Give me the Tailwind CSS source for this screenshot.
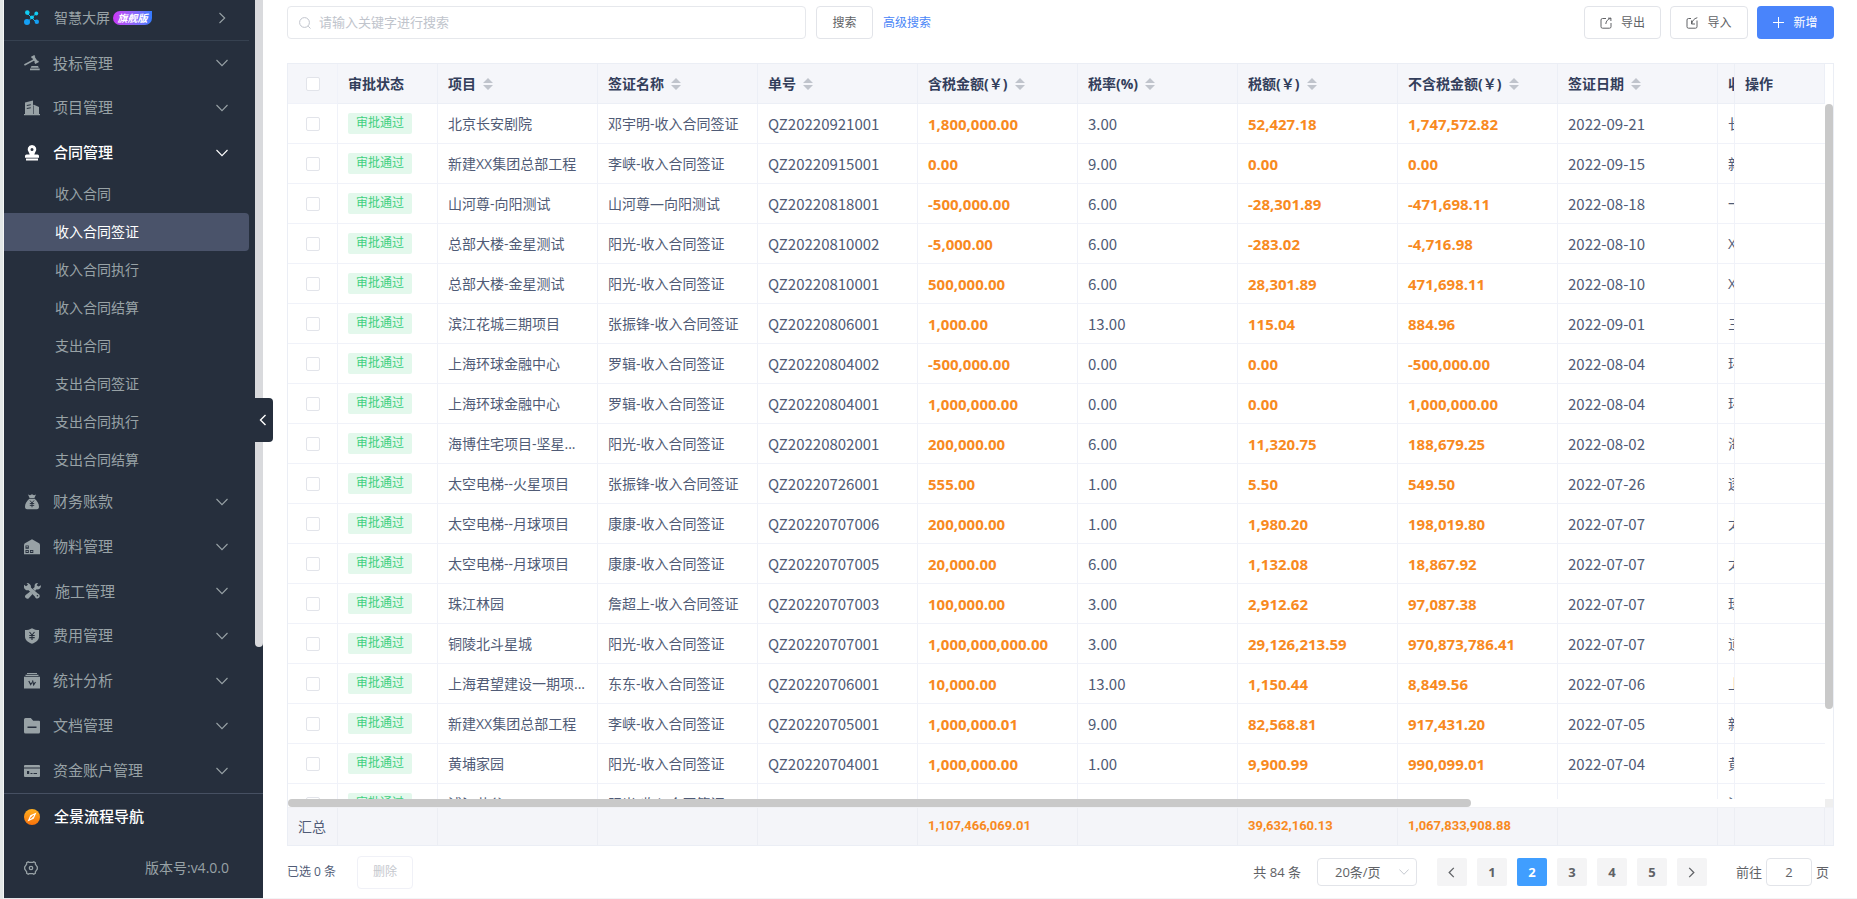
<!DOCTYPE html>
<html lang="zh-CN">
  <head>
    <meta charset="UTF-8" />
    <meta name="viewport" content="width=device-width, initial-scale=1.0" />
    <script src="https://cdn.jsdelivr.net/npm/@tailwindcss/browser@4"></script>
    <title>收入合同签证</title>
  </head>
  <body class="font-['Open_Sans','Noto_Sans_CJK_SC',sans-serif] text-sm text-[#505b76] bg-white">
    <!-- shared icons -->
    <svg class="hidden">
      <symbol id="down" viewBox="0 0 12 12"><path d="M.5 3 6 8.700 11.500 3" fill="none" stroke="currentColor" stroke-width="1.1" /></symbol>
      <symbol id="right" viewBox="0 0 12 12"><path d="M3.500 1 8.700 6 3.500 11" fill="none" stroke="currentColor" stroke-width="1.1" /></symbol>
      <symbol id="left" viewBox="0 0 12 12"><path d="M8.500 1 3.500 6l5 5" fill="none" stroke="currentColor" stroke-width="1.4" /></symbol>
      <symbol id="sort" viewBox="0 0 10 12"><path d="M5 0l5 5H0zM5 12l5-5H0z" fill="#c0c4cc" /></symbol>
    </svg>

    <div class="flex h-screen overflow-hidden">
      <div class="w-1 shrink-0 bg-[#e3e7e7] border-r border-[#f4f6f6]"></div>

      <!-- sidebar -->
      <aside class="relative flex flex-col w-[259px] shrink-0 bg-[#262f3d] text-[#98a2a6] border-b border-gray-200">
        <a href="#" class="flex items-center h-[41px] pb-1 pl-5 pr-[21px] mr-[14px] border-b border-[#364150]">
          <svg class="w-4 h-4" viewBox="0 0 16 16">
            <path d="M3.500 3.500 12.500 12.500M12 3.500 3 12.500" stroke="#14b4ee" stroke-width="1" />
            <g fill="#12cdf2"><circle cx="3.300" cy="2.600" r="2.300" /><circle cx="12.300" cy="3.500" r="1.900" /><circle cx="8" cy="7.300" r="1.900" /></g>
            <g fill="#15a0f5"><circle cx="3" cy="12" r="3" /><circle cx="12.800" cy="11.800" r="2.200" /></g>
          </svg>
          <span class="ml-[14px]">智慧大屏</span>
          <span class="ml-[3px] w-[39px] h-[14px] leading-[14px] text-center text-[10px] italic font-bold text-white rounded-l-full rounded-br-full bg-linear-to-r from-[#c935f5] to-[#2f7bff]">旗舰版</span>
          <svg class="w-3 h-3 ml-auto"><use href="#right" /></svg>
        </a>

        <nav class="flex flex-col flex-1 text-[15px]">
          <a href="#" class="flex flex-1 items-center pl-5 pr-[35px]">
            <svg class="w-4 h-4 mr-[13px]" viewBox="0 0 16 16" fill="currentColor"><path d="M7 1.700 10.300 0l1 1.400-.6.400 2.600 4 .7-.3 1 1.500-3.700 2-1-1.500.6-.4L10 5.800.8 10.700 0 9.200 9 4.500 8.200 3l-.5.300zM7.500 11h6.500l.8 1.700H6.700zM6 13.500h9.700v1.700H6z" /></svg>
            投标管理<svg class="w-3 h-3 ml-auto"><use href="#down" /></svg>
          </a>
          <a href="#" class="flex flex-1 items-center pl-5 pr-[35px]">
            <svg class="w-4 h-4 mr-[13px]" viewBox="0 0 16 16" fill="currentColor"><path fill-rule="evenodd" d="M1 2.500 9 .5V5l1-.3 5 2.300v7h1v1.300H0V14h1zM2.800 5v1.100l4-.8V4.200zM2.800 8v1.100l4-.8V7.200z" /><path d="M9.500 5.500V14" stroke="#262f3d" stroke-width=".6" /></svg>
            项目管理<svg class="w-3 h-3 ml-auto"><use href="#down" /></svg>
          </a>
          <a href="#" class="flex flex-1 items-center pl-5 pr-[35px] font-medium text-white">
            <svg class="w-4 h-4 mr-[13px]" viewBox="0 0 16 16" fill="currentColor"><path fill-rule="evenodd" d="M8 0a4.500 4.500 0 0 1 3 7.700L10.300 9.500h3.200a1.500 1.500 0 0 1 1.500 1.500v1.700H1V11a1.500 1.500 0 0 1 1.500-1.500h3.200L5 7.700A4.500 4.500 0 0 1 8 0zm0 2.900a1.500 1.500 0 1 0 0 3 1.500 1.500 0 0 0 0-3zM2 13.600h12v1.900H2z" /></svg>
            合同管理<svg class="w-3 h-3 ml-auto"><use href="#down" /></svg>
          </a>
          <div class="flex flex-col mr-[14px] text-sm leading-[38px]">
            <a href="#" class="pl-[51px]">收入合同</a>
            <a href="#" class="pl-[51px] bg-[#4a536a] text-white rounded-r-sm">收入合同签证</a>
            <a href="#" class="pl-[51px]">收入合同执行</a>
            <a href="#" class="pl-[51px]">收入合同结算</a>
            <a href="#" class="pl-[51px]">支出合同</a>
            <a href="#" class="pl-[51px]">支出合同签证</a>
            <a href="#" class="pl-[51px]">支出合同执行</a>
            <a href="#" class="pl-[51px]">支出合同结算</a>
          </div>
          <a href="#" class="flex flex-1 items-center pl-5 pr-[35px]">
            <svg class="w-4 h-4 mr-[13px]" viewBox="0 0 16 16" fill="currentColor"><path d="M4 .5 6 1.200 8 .3l2 .9 2-.7-1.600 3.500H5.600z" /><path d="M5.300 4.800h5.400c2.500 2 4.300 5 4.300 8 0 1.500-.7 2.400-2 2.400H3c-1.300 0-2-.9-2-2.400 0-3 1.800-6 4.300-8z" /><path d="M6 6.500 8 9l2-2.500M8 9v4.300M5.800 9.500h4.400M5.800 11.400h4.400" fill="none" stroke="#262f3d" stroke-width=".9" /></svg>
            财务账款<svg class="w-3 h-3 ml-auto"><use href="#down" /></svg>
          </a>
          <a href="#" class="flex flex-1 items-center pl-5 pr-[35px]">
            <svg class="w-4 h-4 mr-[13px]" viewBox="0 0 16 16" fill="currentColor"><path fill-rule="evenodd" d="M8 .2 15.500 4.500 16 6v9.300H0V6l.5-1.500zM1.500 6.500v3.200h3.300V6.500zM1.500 10.900v3.200h3.300v-3.200zM6 10.900v3.200h3.300v-3.200z" /><path d="M2.300 7.800h1.700M2.300 12.400h1.700M6.800 12.400h1.700" stroke="currentColor" /></svg>
            物料管理<svg class="w-3 h-3 ml-auto"><use href="#down" /></svg>
          </a>
          <a href="#" class="flex flex-1 items-center pl-5 pr-[35px]">
            <svg class="w-[17px] h-4 mr-[14px]" viewBox="0 0 17 16" fill="currentColor"><path d="M0 4.500V1.800l2 1.500 2-1.500L2.600 0C5.400-.1 7.400 2 6.900 4.500l6.900 6c2.200.8 2.500 3 1.200 4.200-1.400 1.300-3.700.8-4.200-1.300L4.600 7.200C2.500 7.800.5 6.500 0 4.500z" /><path d="M8.900 5.800 10.700 4C10 1.800 11.500-.3 14 .1L12.600 2.300 14.500 3.600 17 2.300c.1 2.600-2 4.500-4.300 4L10.900 8.100zM6.200 8.600 8.600 10.900 5 15a2.200 2.200 0 0 1-3.300-3.100z" /><circle cx="13.400" cy="12.800" r=".8" fill="#262f3d" /></svg>
            施工管理<svg class="w-3 h-3 ml-auto"><use href="#down" /></svg>
          </a>
          <a href="#" class="flex flex-1 items-center pl-5 pr-[35px]">
            <svg class="w-4 h-4 mr-[13px]" viewBox="0 0 16 16" fill="currentColor"><path d="M8 .2c2 1.300 4.500 1.800 7 1.800v6.500c0 3.500-3 6-7 7.200-4-1.200-7-3.700-7-7.200V2C3.500 2 6 1.500 8 .2z" /><path d="M5.500 4 8 7l2.500-3M8 7v5M5.300 7.500h5.400M5.300 9.600h5.400" fill="none" stroke="#262f3d" stroke-width="1.100" /></svg>
            费用管理<svg class="w-3 h-3 ml-auto"><use href="#down" /></svg>
          </a>
          <a href="#" class="flex flex-1 items-center pl-5 pr-[35px]">
            <svg class="w-4 h-4 mr-[13px]" viewBox="0 0 16 16" fill="currentColor"><path d="M3 0h10v1H3zM1.500 1.700h13v1.300h-13zM0 3.800h16v11.700H0z" /><path d="M4.800 8 6.700 11.500 8 9.500M8.500 7.500 9.700 11.800 11.500 9" fill="none" stroke="#262f3d" stroke-width="1.200" /></svg>
            统计分析<svg class="w-3 h-3 ml-auto"><use href="#down" /></svg>
          </a>
          <a href="#" class="flex flex-1 items-center pl-5 pr-[35px]">
            <svg class="w-4 h-4 mr-[13px]" viewBox="0 0 16 16" fill="currentColor"><path fill-rule="evenodd" d="M1.500 0h5.300l2.400 2.800H15a1 1 0 0 1 1 1V14a1.500 1.500 0 0 1-1.500 1.500h-13A1.500 1.500 0 0 1 0 14V1.500A1.500 1.500 0 0 1 1.500 0zM3.500 8.500v1.400h9V8.500z" /></svg>
            文档管理<svg class="w-3 h-3 ml-auto"><use href="#down" /></svg>
          </a>
          <a href="#" class="flex flex-1 items-center pl-5 pr-[35px]">
            <svg class="w-4 h-4 mr-[13px]" viewBox="0 0 16 16" fill="currentColor"><path fill-rule="evenodd" d="M1 2h14a1 1 0 0 1 1 1v1.500H0V3a1 1 0 0 1 1-1zM0 5.600h16V13a1 1 0 0 1-1 1H1a1 1 0 0 1-1-1zM3 8v3h2.200V8zM6.500 10v1.100h2V10zM9.500 10v1.100h3.500V10z" /></svg>
            资金账户管理<svg class="w-3 h-3 ml-auto"><use href="#down" /></svg>
          </a>
        </nav>

        <div class="h-[105px] border-t border-[#465062]">
          <a href="#" class="flex items-center h-[46px] pl-5 text-[15px] font-medium text-white">
            <svg class="w-4 h-4 mr-[14px]" viewBox="0 0 16 16"><defs><linearGradient id="orange" x2="0" y2="1"><stop stop-color="#ffb020" /><stop offset="1" stop-color="#f9720b" /></linearGradient></defs><circle cx="8" cy="8" r="8" fill="url(#orange)" /><path d="M12.500 3.500 9.700 9.700 3.500 12.500 6.300 6.300z" fill="#fff" /><path d="M6.300 9.700 9.700 6.300" stroke="#fb8a14" stroke-width="1.200" /></svg>
            全景流程导航
          </a>
          <div class="flex items-center justify-between h-[56px] pl-5 pr-[34px]">
            <svg class="w-[14px] h-[14px]" viewBox="0 0 14 14" fill="none" stroke="currentColor" stroke-width="1.300"><path d="M4.200.8 5.200 1.300h3.600l1-.5 1.600 1-.1 1.200L13.300 6v2l-2 3 .1 1.200-1.600 1-1-.5H5.200l-1 .5-1.600-1 .1-1.200L.7 8V6l2-3-.1-1.200z" /><circle cx="7" cy="7" r="1.700" /></svg>
            <span>版本号:v4.0.0</span>
          </div>
        </div>

        <!-- scrollbar and collapse handle lie over the menu edge -->
        <div class="absolute top-0 right-0 w-2 h-[647px] bg-[#d9dadd] rounded-b-full"></div>
        <button class="absolute left-[251px] top-[398px] flex items-center justify-center w-[18px] h-[44px] pr-0.5 bg-[#262f3d] text-white rounded-r-sm" aria-label="收起菜单">
          <svg class="w-3 h-3"><use href="#left" /></svg>
        </button>
      </aside>

      <main class="flex flex-col flex-1 min-w-0 pt-[6px] pl-6 pr-[23px] border-b border-gray-100">
        <!-- toolbar -->
        <div class="flex items-center h-[33px] text-xs text-[#606266]">
          <label class="flex items-center w-[519px] h-full px-[11px] border border-[#e6e8ec] rounded text-[#c0c4cc]">
            <svg class="w-3 h-3 mr-2" viewBox="0 0 12 12" fill="none" stroke="currentColor"><circle cx="5.500" cy="5.500" r="4.900" /><path d="m9.200 9.200 2.300 2.300" /></svg>
            <input type="text" placeholder="请输入关键字进行搜索" aria-label="搜索" class="flex-1 text-[13px] text-gray-600 placeholder:text-[#c0c4cc] outline-none" />
          </label>
          <button class="w-[57px] h-full ml-[10px] border border-[#e2e4e9] rounded">搜索</button>
          <a href="#" class="ml-[10px] text-[#4a86f7]">高级搜索</a>
          <div class="flex gap-[9px] ml-auto h-full">
            <button class="flex items-center justify-center gap-[9px] w-[77px] border border-[#e2e4e9] rounded">
              <svg class="w-3 h-3" viewBox="0 0 12 12" fill="none" stroke="currentColor"><path d="M6 1.500H2.500A1.500 1.500 0 0 0 1 3v6.700a1.500 1.500 0 0 0 1.500 1.500h7A1.500 1.500 0 0 0 11 9.700V6M8 1.200h3M10.900 1v3M10.900 1.200C8 2 6 4 5.800 7" /></svg>
              导出
            </button>
            <button class="flex items-center justify-center gap-[9px] w-[78px] border border-[#e2e4e9] rounded">
              <svg class="w-3 h-3" viewBox="0 0 12 12" fill="none" stroke="currentColor"><path d="M5 1.500H2.500A1.500 1.500 0 0 0 1 3v6.700a1.500 1.500 0 0 0 1.500 1.500h7A1.500 1.500 0 0 0 11 9.700V3.500M5.500 3.500V7H9M11.300.7C8 1.500 6 4 5.800 7" /></svg>
              导入
            </button>
            <button class="flex items-center justify-center gap-[9px] w-[77px] bg-[#4984fb] text-white rounded">
              <svg class="w-[11px] h-[11px]" viewBox="0 0 11 11" stroke="currentColor"><path d="M5.500 0v11M0 5.500h11" /></svg>
              新增
            </button>
          </div>
        </div>

        <!-- table -->
        <div class="flex flex-col flex-1 min-h-0 mt-6 border border-[#ebeef5]">
          <div class="flex">
            <table class="flex-1 w-full table-fixed border-separate border-spacing-0 bg-[#f5f6fa] text-left text-[#333e5b]">
              <colgroup class="cols"></colgroup>
              <thead><tr id="head" class="h-10"></tr></thead>
            </table>
            <div class="w-2 shrink-0 bg-white"></div>
          </div>
          <div class="flex flex-1 min-h-0">
            <div class="flex-1 min-w-0 overflow-hidden">
              <table class="w-full table-fixed border-separate border-spacing-0">
                <colgroup class="cols"></colgroup>
                <tbody id="rows"></tbody>
              </table>
            </div>
            <div class="w-2 shrink-0"><div class="h-[87%] bg-[#c9c9c9] rounded-full"></div></div>
          </div>
          <div class="flex h-2">
            <div class="flex-1"><div class="w-[77%] h-2 bg-[#c9c9c9] rounded-full"></div></div>
            <div class="w-2 bg-[#efefef]"></div>
          </div>
          <div class="flex bg-[#f4f5f9] border-t border-[#f0f1f5]">
            <table class="flex-1 w-full table-fixed border-separate border-spacing-0">
              <colgroup class="cols"></colgroup>
              <tbody><tr id="total" class="h-[37px]"></tr></tbody>
            </table>
            <div class="w-2 shrink-0"></div>
          </div>
        </div>

        <!-- pagination -->
        <div class="flex items-center h-[52px] text-[13px] text-[#606266]">
          <span class="text-xs text-[#505b76]">已选 0 条</span>
          <button disabled class="w-14 h-[33px] ml-[21px] text-xs text-[#c5c8ce] border border-[#f0f1f7] rounded">删除</button>
          <span class="ml-auto mr-4">共 84 条</span>
          <div class="relative w-[100px] mr-5">
            <select aria-label="每页条数" class="w-full h-7 pl-[17px] appearance-none border border-[#e2e4e9] rounded">
              <option>20条/页</option>
            </select>
            <svg class="absolute right-2 top-2 w-[10px] h-3 text-[#c0c4cc] pointer-events-none"><use href="#down" /></svg>
          </div>
          <div class="flex gap-[10px] font-bold">
            <button class="flex items-center justify-center w-[30px] h-7 bg-[#f4f4f5] rounded-xs" aria-label="上一页"><svg class="w-[11px] h-[11px]"><use href="#left" /></svg></button>
            <button class="w-[30px] h-7 bg-[#f4f4f5] rounded-xs">1</button>
            <button class="w-[30px] h-7 bg-[#409eff] text-white rounded-xs">2</button>
            <button class="w-[30px] h-7 bg-[#f4f4f5] rounded-xs">3</button>
            <button class="w-[30px] h-7 bg-[#f4f4f5] rounded-xs">4</button>
            <button class="w-[30px] h-7 bg-[#f4f4f5] rounded-xs">5</button>
            <button class="flex items-center justify-center w-[30px] h-7 bg-[#f4f4f5] rounded-xs" aria-label="下一页"><svg class="w-[11px] h-[11px] rotate-180"><use href="#left" /></svg></button>
          </div>
          <label class="flex items-center gap-1 ml-[29px] mr-[5px]">前往
            <input type="text" value="2" class="w-[46px] h-7 text-center border border-[#e2e4e9] rounded" />
            页</label>
        </div>
      </main>
    </div>

    <script>
      const heads = ["审批状态", "项目", "签证名称", "单号", "含税金额(￥)", "税率(%)", "税额(￥)", "不含税金额(￥)", "签证日期", "收", "操作"];
      const rows = [
        ["北京长安剧院", "邓宇明-收入合同签证", "QZ20220921001", "1,800,000.00", "3.00", "52,427.18", "1,747,572.82", "2022-09-21", "长"],
        ["新建XX集团总部工程", "李峡-收入合同签证", "QZ20220915001", "0.00", "9.00", "0.00", "0.00", "2022-09-15", "新"],
        ["山河尊-向阳测试", "山河尊—向阳测试", "QZ20220818001", "-500,000.00", "6.00", "-28,301.89", "-471,698.11", "2022-08-18", "一"],
        ["总部大楼-金星测试", "阳光-收入合同签证", "QZ20220810002", "-5,000.00", "6.00", "-283.02", "-4,716.98", "2022-08-10", "X"],
        ["总部大楼-金星测试", "阳光-收入合同签证", "QZ20220810001", "500,000.00", "6.00", "28,301.89", "471,698.11", "2022-08-10", "X"],
        ["滨江花城三期项目", "张振锋-收入合同签证", "QZ20220806001", "1,000.00", "13.00", "115.04", "884.96", "2022-09-01", "三"],
        ["上海环球金融中心", "罗辑-收入合同签证", "QZ20220804002", "-500,000.00", "0.00", "0.00", "-500,000.00", "2022-08-04", "环"],
        ["上海环球金融中心", "罗辑-收入合同签证", "QZ20220804001", "1,000,000.00", "0.00", "0.00", "1,000,000.00", "2022-08-04", "环"],
        ["海博住宅项目-坚星...", "阳光-收入合同签证", "QZ20220802001", "200,000.00", "6.00", "11,320.75", "188,679.25", "2022-08-02", "海"],
        ["太空电梯--火星项目", "张振锋-收入合同签证", "QZ20220726001", "555.00", "1.00", "5.50", "549.50", "2022-07-26", "逐"],
        ["太空电梯--月球项目", "康康-收入合同签证", "QZ20220707006", "200,000.00", "1.00", "1,980.20", "198,019.80", "2022-07-07", "太"],
        ["太空电梯--月球项目", "康康-收入合同签证", "QZ20220707005", "20,000.00", "6.00", "1,132.08", "18,867.92", "2022-07-07", "太"],
        ["珠江林园", "詹超上-收入合同签证", "QZ20220707003", "100,000.00", "3.00", "2,912.62", "97,087.38", "2022-07-07", "珠"],
        ["铜陵北斗星城", "阳光-收入合同签证", "QZ20220707001", "1,000,000,000.00", "3.00", "29,126,213.59", "970,873,786.41", "2022-07-07", "道"],
        ["上海君望建设一期项...", "东东-收入合同签证", "QZ20220706001", "10,000.00", "13.00", "1,150.44", "8,849.56", "2022-07-06", "上"],
        ["新建XX集团总部工程", "李峡-收入合同签证", "QZ20220705001", "1,000,000.01", "9.00", "82,568.81", "917,431.20", "2022-07-05", "新"],
        ["黄埔家园", "阳光-收入合同签证", "QZ20220704001", "1,000,000.00", "1.00", "9,900.99", "990,099.01", "2022-07-04", "黄"],
        ["浦江花谷", "阳光-收入合同签证", "QZ20220701001", "750,000.00", "3.00", "21,844.66", "728,155.34", "2022-06-21", "浦"],
      ];
      const totals = ["汇总", "", "", "", "", "1,107,466,069.01", "", "39,632,160.13", "1,067,833,908.88", "", "", ""];

      const cell = "pl-[10px] border-r border-b border-[#f0f2f9] whitespace-nowrap overflow-hidden";
      const code = "font-['Noto_Sans_CJK_SC'] text-[15px] leading-5";
      const money = "text-[15px] leading-5 font-bold text-[#f88a1f]";
      // text style of every data column, in order
      const styles = ["", "", code, money, code, money, money, code, ""];
      const check = `<td class="text-center border-r border-b border-[#f0f2f9]"><input type="checkbox" aria-label="选择" class="block mx-auto w-[14px] h-[14px] appearance-none bg-white border border-[#e2e4ea] rounded-xs" /></td>`;

      // the cut-off column takes the rest of the width
      document.querySelectorAll(".cols").forEach((group) => {
        group.innerHTML = `<col class="w-[50px]"><col class="w-[100px]">` + `<col class="w-[160px]">`.repeat(8) + `<col><col class="w-[90px]">`;
      });

      document.getElementById("head").innerHTML = check + heads.map((text, i) => {
        const sort = i > 0 && i < 9 ? `<svg class="inline-block w-[10px] h-3 ml-[7px] -mt-0.5"><use href="#sort" /></svg>` : "";
        return `<th class="pl-[10px] border-r border-b border-[#eceff6] whitespace-nowrap overflow-hidden font-bold">${text}${sort}</th>`;
      }).join("");

      document.getElementById("rows").innerHTML = rows.map((row) => `<tr class="h-10">${check}
        <td class="${cell}"><span class="block w-16 h-[21px] leading-5 text-center text-xs text-[#3fd07f] bg-[#e3f8ec] rounded-xs">审批通过</span></td>
        ${row.map((text, i) => `<td class="${cell} ${styles[i]}">${text}</td>`).join("")}
        <td class="border-b border-[#f0f2f9]"></td></tr>`).join("");

      document.getElementById("total").innerHTML = totals.map((text, i) =>
        `<td class="pl-[10px] border-r border-[#eceef4] ${i ? "font-['Roboto'] text-[13px] font-bold text-[#f88a1f]" : ""}">${text}</td>`).join("");
    </script>
  </body>
</html>
